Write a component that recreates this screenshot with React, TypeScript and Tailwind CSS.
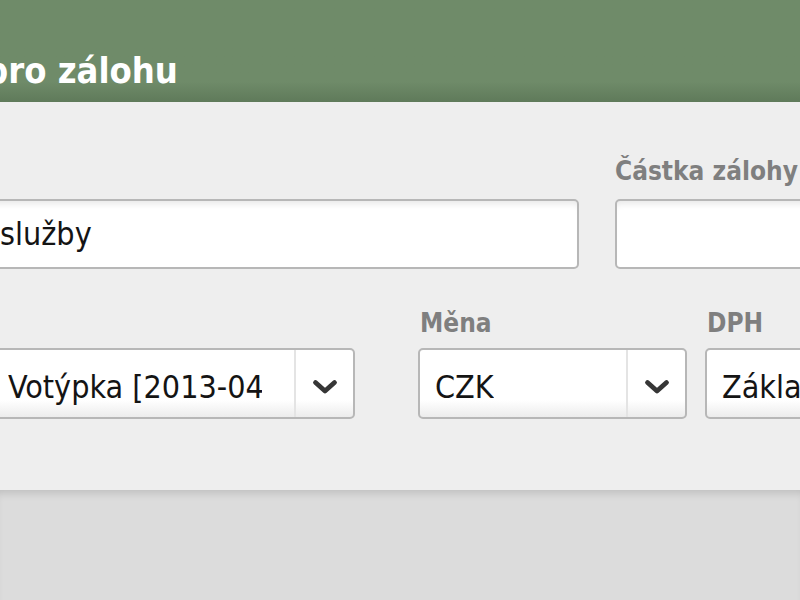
import React from "react";

const FONT = { fontFamily: '"DejaVu Sans Condensed", "DejaVu Sans", sans-serif' };

const Chevron: React.FC = () => (
  <svg width="26" height="16" viewBox="0 0 26 16" fill="none">
    <path d="M3.5 3.5 L13 12 L22.5 3.5" stroke="#363636" strokeWidth="4.8" strokeLinecap="round" strokeLinejoin="round" />
  </svg>
);

const TextInput: React.FC<{ value?: string; className?: string }> = ({ value, className = "" }) => (
  <div
    className={`h-[70px] rounded-[5px] border-2 border-[#b7b7b7] bg-white shadow-[inset_0_7px_6px_-4px_rgba(0,0,0,0.09)] flex items-center overflow-hidden text-[32px] text-[#141414] whitespace-nowrap ${className}`}
  >
    {value}
  </div>
);

const Select: React.FC<{ value: string; textClass?: string; className?: string; button?: boolean }> = ({
  value,
  textClass = "pl-[15px] pr-[30px]",
  className = "",
  button = true,
}) => (
  <div
    className={`h-[71px] rounded-[5px] border-2 border-[#b7b7b7] bg-linear-to-b from-white from-75% to-[#ececec] flex overflow-hidden ${className}`}
  >
    <div className={`flex-1 min-w-0 flex items-center pt-[6px] ${textClass}`}>
      <span className="block overflow-hidden whitespace-nowrap text-[32px] text-[#141414]">{value}</span>
    </div>
    {button && (
      <div className="w-[59px] shrink-0 border-l-2 border-[#e4e4e4] flex items-center justify-center pt-[6px]">
        <Chevron />
      </div>
    )}
  </div>
);

const Label: React.FC<{ children?: React.ReactNode; className?: string }> = ({ children, className = "" }) => (
  <div className={`h-[30px] leading-[30px] text-[26px] font-bold text-[#7f7f7f] whitespace-nowrap ${className}`}>
    {children}
  </div>
);

export default function App() {
  return (
    <div className="w-[800px] h-[600px] overflow-hidden flex flex-col bg-[#dcdcdc]" style={FONT}>
      <div className="h-[102px] shrink-0 bg-linear-to-b from-[#6f8b69] from-80% to-[#5f7a5a] overflow-hidden">
        <h1 className="pt-[44px] -ml-[15px] text-[36px] font-bold text-white leading-normal whitespace-nowrap">
          pro zálohu
        </h1>
      </div>

      <div className="bg-[#eeeeee] pt-[54px] pb-[71px] overflow-hidden">
        <div className="-ml-[40px] flex flex-col">
          <div className="flex gap-[36px]">
            <div className="w-[619px] shrink-0">
              <Label className="mb-[13px]" />
              <TextInput value="služby" className="pl-[38px]" />
            </div>
            <div className="w-[300px] shrink-0">
              <Label className="mb-[13px]">Částka zálohy</Label>
              <TextInput />
            </div>
          </div>

          <div className="flex mt-[39px]">
            <div className="w-[395px] shrink-0">
              <Label className="mb-[10px]" />
              <Select value="Votýpka [2013-04-15]" textClass="pl-[46px] pr-[32px]" />
            </div>
            <div className="w-[269px] shrink-0 ml-[63px]">
              <Label className="mb-[10px] pl-[2px]">Měna</Label>
              <Select value="CZK" />
            </div>
            <div className="w-[300px] shrink-0 ml-[18px]">
              <Label className="mb-[10px] pl-[2px]">DPH</Label>
              <Select value="Základní sazba" button={false} />
            </div>
          </div>
        </div>
      </div>

      <div className="flex-1 bg-[#dcdcdc] shadow-[inset_0_8px_8px_-5px_rgba(0,0,0,0.14)]" />
    </div>
  );
}
